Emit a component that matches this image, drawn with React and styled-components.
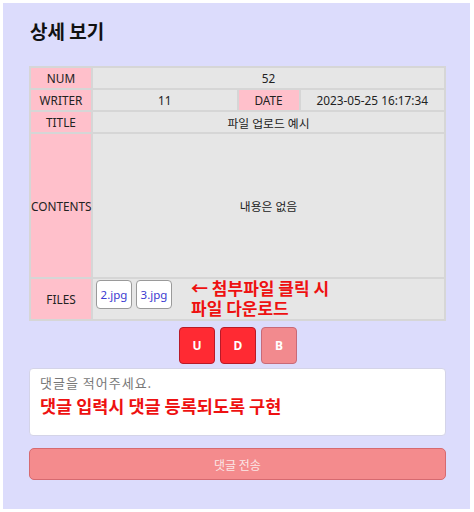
import React from "react";
import styled, { createGlobalStyle } from "styled-components";

const Global = createGlobalStyle`
  html, body { margin: 0; padding: 0; background: #ffffff; }
  body { padding: 3px 4px 3px 3px; font-family: "Noto Sans", "Noto Sans CJK KR", sans-serif; }
  * { box-sizing: border-box; }
`;

const Page = styled.div`
  background: #dcdcfc;
  min-height: 506px;
  padding: 14px 24px 20px 26px;
`;

const Title = styled.h2`
  margin: 0 0 21px 1px;
  font-family: "Noto Sans CJK KR", sans-serif;
  font-size: 19px;
  font-weight: 700;
  color: #111;
  line-height: 28px;
`;

const Table = styled.table`
  width: 417px;
  border-collapse: separate;
  border-spacing: 2px;
  background: #d6d6d6;
  table-layout: fixed;
`;

const Th = styled.td`
  background: #ffc0cb;
  text-align: center;
  font-size: 11.8px;
  color: #222;
  padding: 0;
  height: ${(p) => p.$h || 20}px;
  font-family: "Noto Sans", "Noto Sans CJK KR", sans-serif;
`;

const Td = styled.td`
  background: #e6e6e6;
  text-align: center;
  font-size: 11.8px;
  color: #222;
  padding: 0;
  height: ${(p) => p.$h || 20}px;
  font-family: "Noto Sans", "Noto Sans CJK KR", sans-serif;
`;

const FilesCell = styled.td`
  background: #e6e6e6;
  padding: 1px 3px 0;
  vertical-align: top;
  height: 40px;
`;

const FilesRow = styled.div`
  display: flex;
  align-items: flex-start;
  gap: 4px;
`;

const FileButton = styled.button`
  background: #fff;
  border: 1px solid #9a9a9a;
  border-radius: 4px;
  height: 29px;
  width: 36px;
  padding: 0;
  color: #3a3ad0;
  font-size: 11.5px;
  font-family: "Noto Sans", sans-serif;
`;

const Note = styled.div`
  color: #ee1111;
  font-family: "Noto Sans CJK KR", sans-serif;
  font-weight: 700;
  font-size: ${(p) => p.$size || 16}px;
  line-height: ${(p) => p.$lh || 19}px;
  text-align: left;
`;

const FilesNote = styled(Note)`
  margin-left: 15px;
  margin-top: -2px;
`;

const ButtonBar = styled.div`
  display: flex;
  justify-content: center;
  gap: 5px;
  margin: 6px 0 4px;
  padding-left: 1px;
`;

const ActionButton = styled.button`
  width: 36px;
  height: 37px;
  border-radius: 4px;
  border: 1px solid ${(p) => (p.$light ? "#c86a78" : "#b81a28")};
  background: ${(p) => (p.$light ? "#f28a8e" : "#ff2a33")};
  color: #fff;
  font-weight: 700;
  font-size: 12px;
  font-family: "Noto Sans", sans-serif;
  padding: 0;
`;

const CommentBox = styled.div`
  width: 417px;
  height: 68px;
  background: #fff;
  border: 1px solid #d4d4e8;
  border-radius: 4px;
  padding: 4px 10px;
`;

const Placeholder = styled.div`
  color: #777;
  font-size: 13px;
  font-family: "Noto Sans CJK KR", sans-serif;
  letter-spacing: 1px;
  line-height: 20px;
`;

const CommentNote = styled(Note)`
  margin-left: 0;
  margin-top: 2px;
`;

const Submit = styled.button`
  display: block;
  width: 417px;
  height: 32px;
  margin-top: 12px;
  background: #f48b8d;
  border: 1px solid #d66a70;
  border-radius: 5px;
  color: #fbe8e8;
  font-size: 12px;
  font-family: "Noto Sans CJK KR", sans-serif;
`;

export default function App() {
  return (
    <>
      <Global />
      <Page>
        <Title>상세 보기</Title>
        <Table>
          <colgroup>
            <col style={{ width: 60 }} />
            <col />
            <col style={{ width: 60 }} />
            <col />
          </colgroup>
          <tbody>
            <tr>
              <Th>NUM</Th>
              <Td colSpan={3}>52</Td>
            </tr>
            <tr>
              <Th>WRITER</Th>
              <Td>11</Td>
              <Th>DATE</Th>
              <Td>2023-05-25 16:17:34</Td>
            </tr>
            <tr>
              <Th>TITLE</Th>
              <Td colSpan={3}>파일 업로드 예시</Td>
            </tr>
            <tr>
              <Th $h={143}>CONTENTS</Th>
              <Td colSpan={3} $h={143}>내용은 없음</Td>
            </tr>
            <tr>
              <Th $h={40}>FILES</Th>
              <FilesCell colSpan={3}>
                <FilesRow>
                  <FileButton>2.jpg</FileButton>
                  <FileButton>3.jpg</FileButton>
                  <FilesNote $size={17} $lh={20}>
                    ← 첨부파일 클릭 시
                    <br />
                    파일 다운로드
                  </FilesNote>
                </FilesRow>
              </FilesCell>
            </tr>
          </tbody>
        </Table>
        <ButtonBar>
          <ActionButton>U</ActionButton>
          <ActionButton>D</ActionButton>
          <ActionButton $light>B</ActionButton>
        </ButtonBar>
        <CommentBox>
          <Placeholder>댓글을 적어주세요.</Placeholder>
          <CommentNote $size={17.5} $lh={22}>댓글 입력시 댓글 등록되도록 구현</CommentNote>
        </CommentBox>
        <Submit>댓글 전송</Submit>
      </Page>
    </>
  );
}
